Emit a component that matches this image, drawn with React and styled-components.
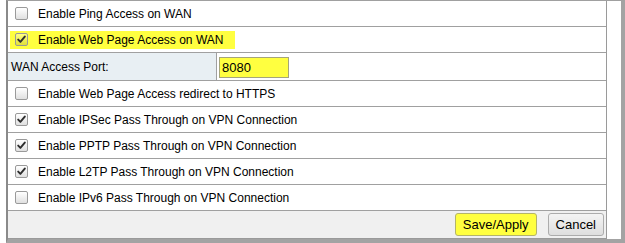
import React from "react";
import styled, { createGlobalStyle } from "styled-components";

const GlobalStyle = createGlobalStyle`
  html, body { margin: 0; padding: 0; background: #fff; }
  body {
    font-family: "Liberation Sans", Arial, sans-serif;
    font-size: 12px;
    color: #000;
  }
`;

const Frame = styled.div`
  box-sizing: border-box;
  width: 619px;
  height: 243px;
  margin-left: 6px;
  border-top: 1px solid #a0a0a0;
  border-left: 2px solid #8a8a8a;
  border-right: 4px solid #a3a3a3;
  border-bottom: 4px solid #a3a3a3;
  background: #fff;
`;

const Panel = styled.div`
  box-sizing: border-box;
  width: 599px;
  border-right: 1px solid #9a9a9a;
  border-bottom: 1px solid #9a9a9a;
`;

const Row = styled.div`
  display: flex;
  align-items: center;
  height: 25px;
  padding-left: 7px;
  border-bottom: 1px solid #a0a0a0;
`;

const Highlight = styled.span`
  display: inline-flex;
  align-items: center;
  height: 18px;
  margin-left: -5px;
  padding: 0 12px 0 5px;
  background: #ffff40;
`;

const Label = styled.span`
  margin-left: 10px;
  white-space: nowrap;
`;

const Box = styled.span`
  box-sizing: border-box;
  display: inline-flex;
  align-items: center;
  justify-content: center;
  width: 13px;
  height: 13px;
  border: 1px solid #9a9a9a;
  border-radius: 2px;
  background: linear-gradient(rgba(255, 255, 255, 0.35), rgba(0, 0, 0, 0.12));
  flex: none;
`;

const PortRow = styled.div`
  display: grid;
  grid-template-columns: 209px 1fr;
  height: 27px;
  border-bottom: 1px solid #a0a0a0;
`;

const PortLabel = styled.div`
  box-sizing: border-box;
  display: flex;
  align-items: center;
  padding-left: 3px;
  background: #e8eff3;
  border-right: 1px solid #a0a0a0;
`;

const PortCell = styled.div`
  display: flex;
  align-items: center;
  padding-left: 2px;
`;

const PortInput = styled.input`
  box-sizing: border-box;
  width: 70px;
  height: 21px;
  margin: 1px 0 0;
  padding: 0 2px;
  border: 1px solid #a5a57a;
  background: #ffff40;
  font-family: "Liberation Sans", Arial, sans-serif;
  font-size: 13px;
  color: #000;
  outline: none;
`;

const ButtonBar = styled.div`
  display: flex;
  justify-content: flex-end;
  align-items: center;
  gap: 11px;
  height: 27px;
  padding-right: 2px;
  background: #f0f0f0;
`;

const Button = styled.button`
  box-sizing: border-box;
  height: 23px;
  padding: 0 7px;
  font-family: "Liberation Sans", Arial, sans-serif;
  font-size: 13px;
  color: #000;
  border: 1px solid ${(p) => (p.$hot ? "#b4b46a" : "#acacac")};
  border-radius: 3px;
  background: ${(p) =>
    p.$hot ? "#ffff40" : "linear-gradient(#f4f4f4, #dedede)"};
  cursor: pointer;
`;

function Checkbox({ checked }) {
  return (
    <Box role="checkbox" aria-checked={checked}>
      {checked && (
        <svg width="9" height="9" viewBox="0 0 9 9">
          <path
            d="M1.2 4.6 L3.4 6.9 L7.8 1.6"
            fill="none"
            stroke="#2e2e2e"
            strokeWidth="1.9"
            strokeLinecap="round"
            strokeLinejoin="round"
          />
        </svg>
      )}
    </Box>
  );
}

const options = [
  { key: "https", label: "Enable Web Page Access redirect to HTTPS", checked: false },
  { key: "ipsec", label: "Enable IPSec Pass Through on VPN Connection", checked: true },
  { key: "pptp", label: "Enable PPTP Pass Through on VPN Connection", checked: true },
  { key: "l2tp", label: "Enable L2TP Pass Through on VPN Connection", checked: true },
  { key: "ipv6", label: "Enable IPv6 Pass Through on VPN Connection", checked: false },
];

export default function App() {
  return (
    <>
      <GlobalStyle />
      <Frame>
        <Panel>
          <Row>
            <Checkbox checked={false} />
            <Label>Enable Ping Access on WAN</Label>
          </Row>
          <Row>
            <Highlight>
              <Checkbox checked />
              <Label>Enable Web Page Access on WAN</Label>
            </Highlight>
          </Row>
          <PortRow>
            <PortLabel>WAN Access Port:</PortLabel>
            <PortCell>
              <PortInput defaultValue="8080" />
            </PortCell>
          </PortRow>
          {options.map((o) => (
            <Row key={o.key}>
              <Checkbox checked={o.checked} />
              <Label>{o.label}</Label>
            </Row>
          ))}
          <ButtonBar>
            <Button $hot>Save/Apply</Button>
            <Button>Cancel</Button>
          </ButtonBar>
        </Panel>
      </Frame>
    </>
  );
}
